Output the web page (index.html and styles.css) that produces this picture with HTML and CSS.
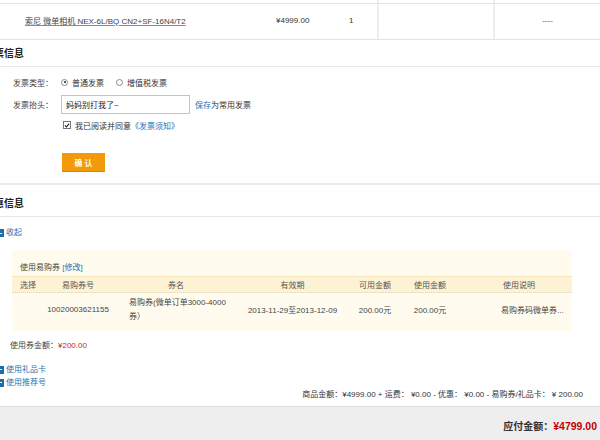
FILE: index.html
```html
<!DOCTYPE html>
<html>
<head>
<meta charset="utf-8">
<link rel="stylesheet" href="styles.css">
</head>
<body>
<div class="page">
  <div class="goods">
    <div class="grow ghead">
      <div></div><div></div><div></div><div class="vl"></div><div class="vl"></div>
    </div>
    <div class="grow gitem">
      <div class="g-name"><a class="plink">索尼 微单相机 NEX-6L/BQ CN2+SF-16N4/T2</a></div>
      <div>¥4999.00</div>
      <div>1</div>
      <div class="vl"></div>
      <div class="vl g-dash">----</div>
    </div>
  </div>

  <section class="sec sec-invoice">
    <h2 class="sec-title">发票信息</h2>
    <div class="form">
      <div class="frow frow-type">
        <span class="flabel">发票类型：</span>
        <span class="radio checked"></span><span class="opt">普通发票</span>
        <span class="radio radio-2"></span><span class="opt">增值税发票</span>
      </div>
      <div class="frow frow-head">
        <span class="flabel">发票抬头：</span>
        <span class="input">妈妈别打我了~</span>
        <span class="save"><a class="link">保存</a>为常用发票</span>
      </div>
      <div class="frow frow-agree">
        <span class="flabel"></span>
        <span class="check"><svg width="8" height="8" viewBox="0 0 8 8"><path d="M1.5 4 L3.3 6 L6.8 1.6" fill="none" stroke="#222" stroke-width="1.5"/></svg></span>
        <span>我已阅读并同意<a class="link">《发票须知》</a></span>
      </div>
      <div class="frow frow-btn">
        <span class="flabel"></span>
        <span class="btn">确 认</span>
      </div>
    </div>
  </section>

  <section class="sec sec-coupon">
    <h2 class="sec-title">优惠信息</h2>
    <div class="toggle"><span class="sq"></span><a class="link">收起</a></div>
    <div class="cbox">
      <div class="ctitle">使用易购券 <a class="link">[修改]</a></div>
      <div class="crow chead">
        <div class="c1">选择</div>
        <div class="c2">易购券号</div>
        <div class="c3 c3h">券名</div>
        <div class="c4">有效期</div>
        <div class="c5">可用金额</div>
        <div class="c6">使用金额</div>
        <div class="c7">使用说明</div>
      </div>
      <div class="crow cdata">
        <div class="c1"></div>
        <div class="c2">10020003621155</div>
        <div class="c3"><span class="cname">易购券(微单订单3000-4000券）</span></div>
        <div class="c4">2013-11-29至2013-12-09</div>
        <div class="c5">200.00元</div>
        <div class="c6">200.00元</div>
        <div class="c7">易购券码微单券...</div>
      </div>
    </div>
    <div class="used">使用券金额：<span class="red">¥200.00</span></div>
    <div class="more">
      <div class="toggle2"><span class="sq plus"></span><a class="link">使用礼品卡</a></div>
      <div class="toggle2"><span class="sq plus"></span><a class="link">使用推荐号</a></div>
    </div>
    <div class="summary">商品金额：¥4999.00 + 运费： ¥0.00 - 优惠： ¥0.00 - 易购券/礼品卡： ¥ 200.00</div>
  </section>

  <div class="footer">
    <span class="pay-label">应付金额：</span><span class="pay-amt">¥4799.00</span>
  </div>
</div>
</body>
</html>
```

FILE: styles.css
```css
html, body {
  margin: 0;
  padding: 0;
  background: #fff;
}
body {
  width: 600px;
  height: 440px;
  overflow: hidden;
  font-family: "Liberation Sans", Arial, "Noto Sans CJK SC", sans-serif;
  font-size: 8px;
  color: #333;
}
.page {
  width: 600px;
}
a { text-decoration: none; }
.link { color: #2a6fb2; }
.red { color: #c8282d; }

/* goods row */
.grow {
  display: grid;
  grid-template-columns: 276px 73px 28px 116px 1fr;
}
.ghead {
  height: 3px;
  border-bottom: 1px solid #e2e2e2;
}
.gitem {
  height: 35px;
  border-bottom: 1px solid #e2e2e2;
  align-items: center;
}
.gitem > div {
  height: 100%;
  display: flex;
  align-items: center;
  padding-bottom: 3px;
  box-sizing: border-box;
}
.vl { border-left: 2px solid #ededed; }
.g-name { padding-left: 25px; }
.plink {
  color: #444;
  text-decoration: underline;
  text-decoration-color: #888;
}
.gitem .g-dash { justify-content: center; color: #555; }

/* sections */
.sec-title {
  margin: 0 0 0 -16px;
  font-size: 10px;
  font-weight: bold;
  color: #222;
  line-height: 12px;
  padding: 8px 0 6px;
  border-bottom: 1px solid #e8e8e8;
}
.sec-invoice {
  padding-bottom: 11px;
  border-bottom: 2px solid #ebebeb;
}
.sec-coupon .sec-title {
  padding-top: 13px;
}
.form {
  padding-left: 13px;
}
.frow {
  display: flex;
  align-items: center;
}
.flabel {
  width: 48px;
  flex: none;
  color: #444;
}
.frow-type { margin-top: 7px; height: 16px; }
.frow-head { margin-top: 5px; height: 19px; }
.frow-agree { margin-top: 4px; height: 14px; }
.frow-btn { margin-top: 21px; height: 19px; }

.radio {
  width: 7px;
  height: 7px;
  border: 1px solid #888;
  border-radius: 50%;
  box-sizing: border-box;
  margin-right: 4px;
  position: relative;
  background: #fff;
}
.radio.checked::after {
  content: "";
  position: absolute;
  left: 1.5px;
  top: 1.5px;
  width: 2px;
  height: 2px;
  border-radius: 50%;
  background: #222;
}
.radio-2 { margin-left: 12px; }
.input {
  width: 129px;
  height: 19px;
  box-sizing: border-box;
  border: 1px solid #c4c4c4;
  padding-left: 4px;
  display: flex;
  align-items: center;
  color: #222;
}
.save { margin-left: 5px; }
.check {
  margin-left: 2px;
  margin-right: 4px;
  width: 8px;
  height: 8px;
  box-sizing: border-box;
  border: 1px solid #777;
  display: flex;
  align-items: center;
  justify-content: center;
  background: #fff;
}
.check svg { width: 7px; height: 7px; }
.btn {
  margin-left: 1px;
  width: 43px;
  height: 19px;
  background: #f39a0b;
  color: #fff;
  font-weight: bold;
  font-size: 8px;
  display: flex;
  align-items: center;
  justify-content: center;
  border-bottom: 1px solid #d98300;
  box-sizing: border-box;
}

/* coupon */
.toggle {
  margin-top: 10px;
  line-height: 12px;
  display: flex;
  align-items: center;
}
.sq {
  width: 9px;
  height: 8px;
  margin-left: -5px;
  margin-right: 2px;
  background: #1f6cae;
  position: relative;
  flex: none;
}
.sq::after {
  content: "";
  position: absolute;
  left: 2px;
  top: 3.5px;
  width: 5px;
  height: 1px;
  background: #fff;
}
.cbox {
  margin: 11px 0 0 12px;
  width: 560px;
  background: #fffcef;
  padding: 12px 0 5px;
}
.ctitle {
  line-height: 12px;
  padding-left: 8px;
  color: #444;
}
.crow {
  display: grid;
  grid-template-columns: 32px 68px 128px 105px 60px 50px 1fr;
  align-items: center;
}
.crow > div { text-align: center; }
.chead {
  margin-top: 2px;
  height: 17px;
  box-sizing: border-box;
  background: #fdf2d4;
  border-top: 1px solid #f6e6bd;
  border-bottom: 1px dotted #e9d4a2;
  color: #555;
}
.cdata {
  height: 33px;
  color: #444;
}
.crow .c3 { text-align: left; padding-left: 17px; }
.crow .c3h { text-align: center; padding-left: 0; }
.cname {
  display: block;
  width: 104px;
  line-height: 14px;
}
.crow .c7 { text-align: left; padding-left: 48px; }
.chead .c7 { padding-left: 48px; }
.cdata .c7 { padding-left: 46px; }
.cdata .c2 { text-align: center; }

.used {
  margin-top: 9px;
  line-height: 12px;
  padding-left: 10px;
  color: #444;
}
.more { margin-top: 11px; }
.toggle2 {
  line-height: 13px;
  display: flex;
  align-items: center;
}
.summary {
  line-height: 12px;
  text-align: right;
  padding-right: 17px;
  color: #333;
}
.footer {
  margin-top: 5px;
  height: 35px;
  box-sizing: border-box;
  border-top: 1px solid #dcdcdc;
  background: #eeeeee;
  padding: 3px 3px 0 0;
  line-height: 32px;
  text-align: right;
  font-weight: bold;
}
.pay-label { font-size: 10px; color: #333; }
.pay-amt { font-size: 10.5px; color: #c40000; }
```
